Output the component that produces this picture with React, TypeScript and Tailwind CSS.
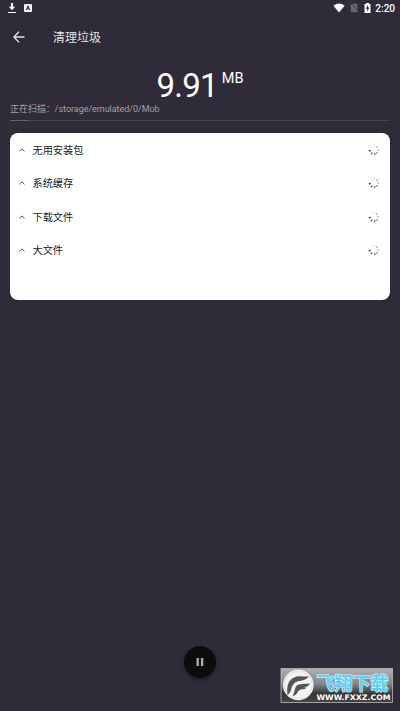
import React from 'react';

const rows = ['无用安装包', '系统缓存', '下载文件', '大文件'];

function Spinner() {
  // Eight ticks, fading clockwise
  const ticks = [
    { a: 0, o: 0.2, w: 1 },
    { a: 45, o: 0.35, w: 1.2 },
    { a: 90, o: 0.35, w: 1.2 },
    { a: 135, o: 0.45, w: 1.3 },
    { a: 170, o: 0.6, w: 1.5 },
    { a: 215, o: 0.6, w: 1.5 },
    { a: 262, o: 0.75, w: 1.5 },
    { a: 325, o: 0.12, w: 0.8 },
  ];
  return (
    <svg width="12" height="12" viewBox="0 0 12 12">
      {ticks.map((t) => (
        <line key={t.a} x1="6" y1="0.7" x2="6" y2="2.9" stroke="#222" strokeWidth={t.w} opacity={t.o} transform={`rotate(${t.a} 6 6)`} />
      ))}
    </svg>
  );
}

function StatusBar() {
  return (
    <div className="flex h-4 items-center pl-[7px] pr-[5px]">
      <svg width="10" height="12" viewBox="0 0 10 12" fill="#f4f3f5">
        <path d="M3.9 1h2.2v3.7h2.1L5 8.2 1.8 4.7h2.1z" />
        <rect x="1" y="10" width="8" height="1" />
      </svg>
      <svg className="ml-[7px]" width="8" height="8" viewBox="0 0 8 8">
        <rect width="8" height="8" rx="1" fill="#f4f3f5" />
        <path d="M2.3 6.2 4 1.9l1.7 4.3M2.9 4.8h2.2" fill="none" stroke="#2f2b38" strokeWidth="1" />
      </svg>
      <div className="ml-auto flex items-center">
        <svg width="12" height="10" viewBox="0 0 12 10" fill="#fff">
          <path d="M0.4 2.8Q6-1.8 11.6 2.8L6 9.6z" />
        </svg>
        <svg className="ml-[5px]" width="8" height="10" viewBox="0 0 8 10">
          <path d="M2.8 0.7H7.5v8.6H0.8V2.8z" fill="#67636e" />
          <path d="M0.8 0.8 8 8.8" stroke="#2f2b38" strokeWidth="0.9" />
          <path d="M0.3 1.3 7.4 9.3" stroke="#88848e" strokeWidth="0.8" />
        </svg>
        <svg className="ml-[6px]" width="7" height="10" viewBox="0 0 7 10">
          <path d="M2 0h3v1h1.5v9h-6V1H2z" fill="#fff" />
          <path d="M4 2 1.7 5.8h1.5V8.6l2.2-4H4z" fill="#2f2b38" />
        </svg>
        <span className="ml-[4px] pt-px text-[10px] font-medium leading-4 text-white">2:20</span>
      </div>
    </div>
  );
}

function Watermark() {
  return (
    <svg className="absolute left-[280px] top-[668px]" width="114" height="36" viewBox="0 0 114 36">
      <defs>
        <linearGradient id="plate" x1="0" y1="0" x2="0" y2="1">
          <stop offset="0" stopColor="#b1b1b3" />
          <stop offset="0.45" stopColor="#858587" />
          <stop offset="0.75" stopColor="#343436" />
          <stop offset="1" stopColor="#464648" />
        </linearGradient>
      </defs>
      <rect x="1" y="0.5" width="111.5" height="34" fill="url(#plate)" stroke="#b9b9bb" strokeWidth="0.8" />
      <circle cx="18.3" cy="17" r="15.3" fill="#f3f3f3" />
      <circle cx="18.3" cy="17" r="14" fill="none" stroke="#cfcfd0" strokeWidth="0.5" />
      <path d="M7.500 27C12 24 10.500 19 14 15.500C18 11.500 24 14.500 29 8.300C25 9.200 21 7.500 16 8.800C9 10.600 6.200 17 7.500 27Z" fill="#565658" />
      <path d="M12.500 28C18 27 16.500 23.500 20 21.700C22 20.800 24.500 22 26.500 19.800L23.500 19.200C26.500 19 29 18 30 15.200C27 16.400 23 15.200 19 16.600C13.500 18.500 15.500 24 12.500 28Z" fill="#565658" />
      <text x="36.5" y="21.5" fontFamily="'Noto Sans CJK SC', sans-serif" fontSize="18.5" fontWeight="700" fill="#62cdf0" stroke="#d5f6ff" strokeWidth="1.2" paintOrder="stroke" textLength="72" lengthAdjust="spacingAndGlyphs">飞翔下载</text>
      <text x="36.5" y="32.3" fontFamily="'DejaVu Sans', sans-serif" fontSize="7.5" fontWeight="700" fill="#fff" textLength="74" lengthAdjust="spacingAndGlyphs">WWW.FXXZ.COM</text>
    </svg>
  );
}

export default function App() {
  return (
    <div className="relative flex h-[711px] w-[400px] flex-col overflow-hidden bg-[#2f2b38] font-[Roboto,'Noto_Sans_CJK_SC',sans-serif]">
      <StatusBar />
      <header className="flex h-[42px] items-center pl-[13px] text-[#e5e4e7]">
        <svg width="12" height="12" viewBox="0 0 12 12" fill="none" stroke="currentColor" strokeWidth="1.3">
          <path d="M11.5 6H1M6 .8.9 6 6 11.2" />
        </svg>
        <h1 className="ml-[28px] pt-[2px] text-[12px] leading-4">清理垃圾</h1>
      </header>
      <div className="flex h-[44px] items-start justify-center text-white">
        <span className="mt-[10px] text-[33px] leading-[36px] tracking-[-0.8px]">9.91</span>
        <span className="ml-[4px] mt-[13px] text-[14.5px] leading-4">MB</span>
      </div>
      <div className="mx-[10px] flex h-[19px] items-start border-b border-[#47434f]">
        <p className="text-[9px] leading-[14px] tracking-[-0.04px] text-[#a4a1a9]">正在扫描：/storage/emulated/0/Mob</p>
      </div>
      <div className="-mt-px ml-[10px] h-px w-[19px] bg-[#67636e]" />
      <main className="mx-[10px] mt-[12.4px] h-[166.6px] rounded-[8px] bg-white">
        {rows.map((r) => (
          <div key={r} className="flex h-[33.3px] items-center pl-[9px] pr-[10px]">
            <svg width="6" height="4" viewBox="0 0 6 4" fill="none" stroke="#555" strokeWidth="1">
              <path d="M.5 3.3 3 .9l2.5 2.4" />
            </svg>
            <span className="ml-[7.5px] pt-[2px] text-[10.2px] leading-4 text-[#222]">{r}</span>
            <span className="ml-auto"><Spinner /></span>
          </div>
        ))}
      </main>
      <button className="mx-auto mb-[33.5px] mt-auto flex size-8 items-center justify-center rounded-full bg-[#0c0b0e] shadow-[0_2px_4px_rgba(0,0,0,0.35)]">
        <svg width="8" height="8" viewBox="0 0 8 8" fill="#aaa">
          <rect x="0.5" width="2.4" height="8" />
          <rect x="4.9" width="2.4" height="8" />
        </svg>
      </button>
      <Watermark />
    </div>
  );
}
